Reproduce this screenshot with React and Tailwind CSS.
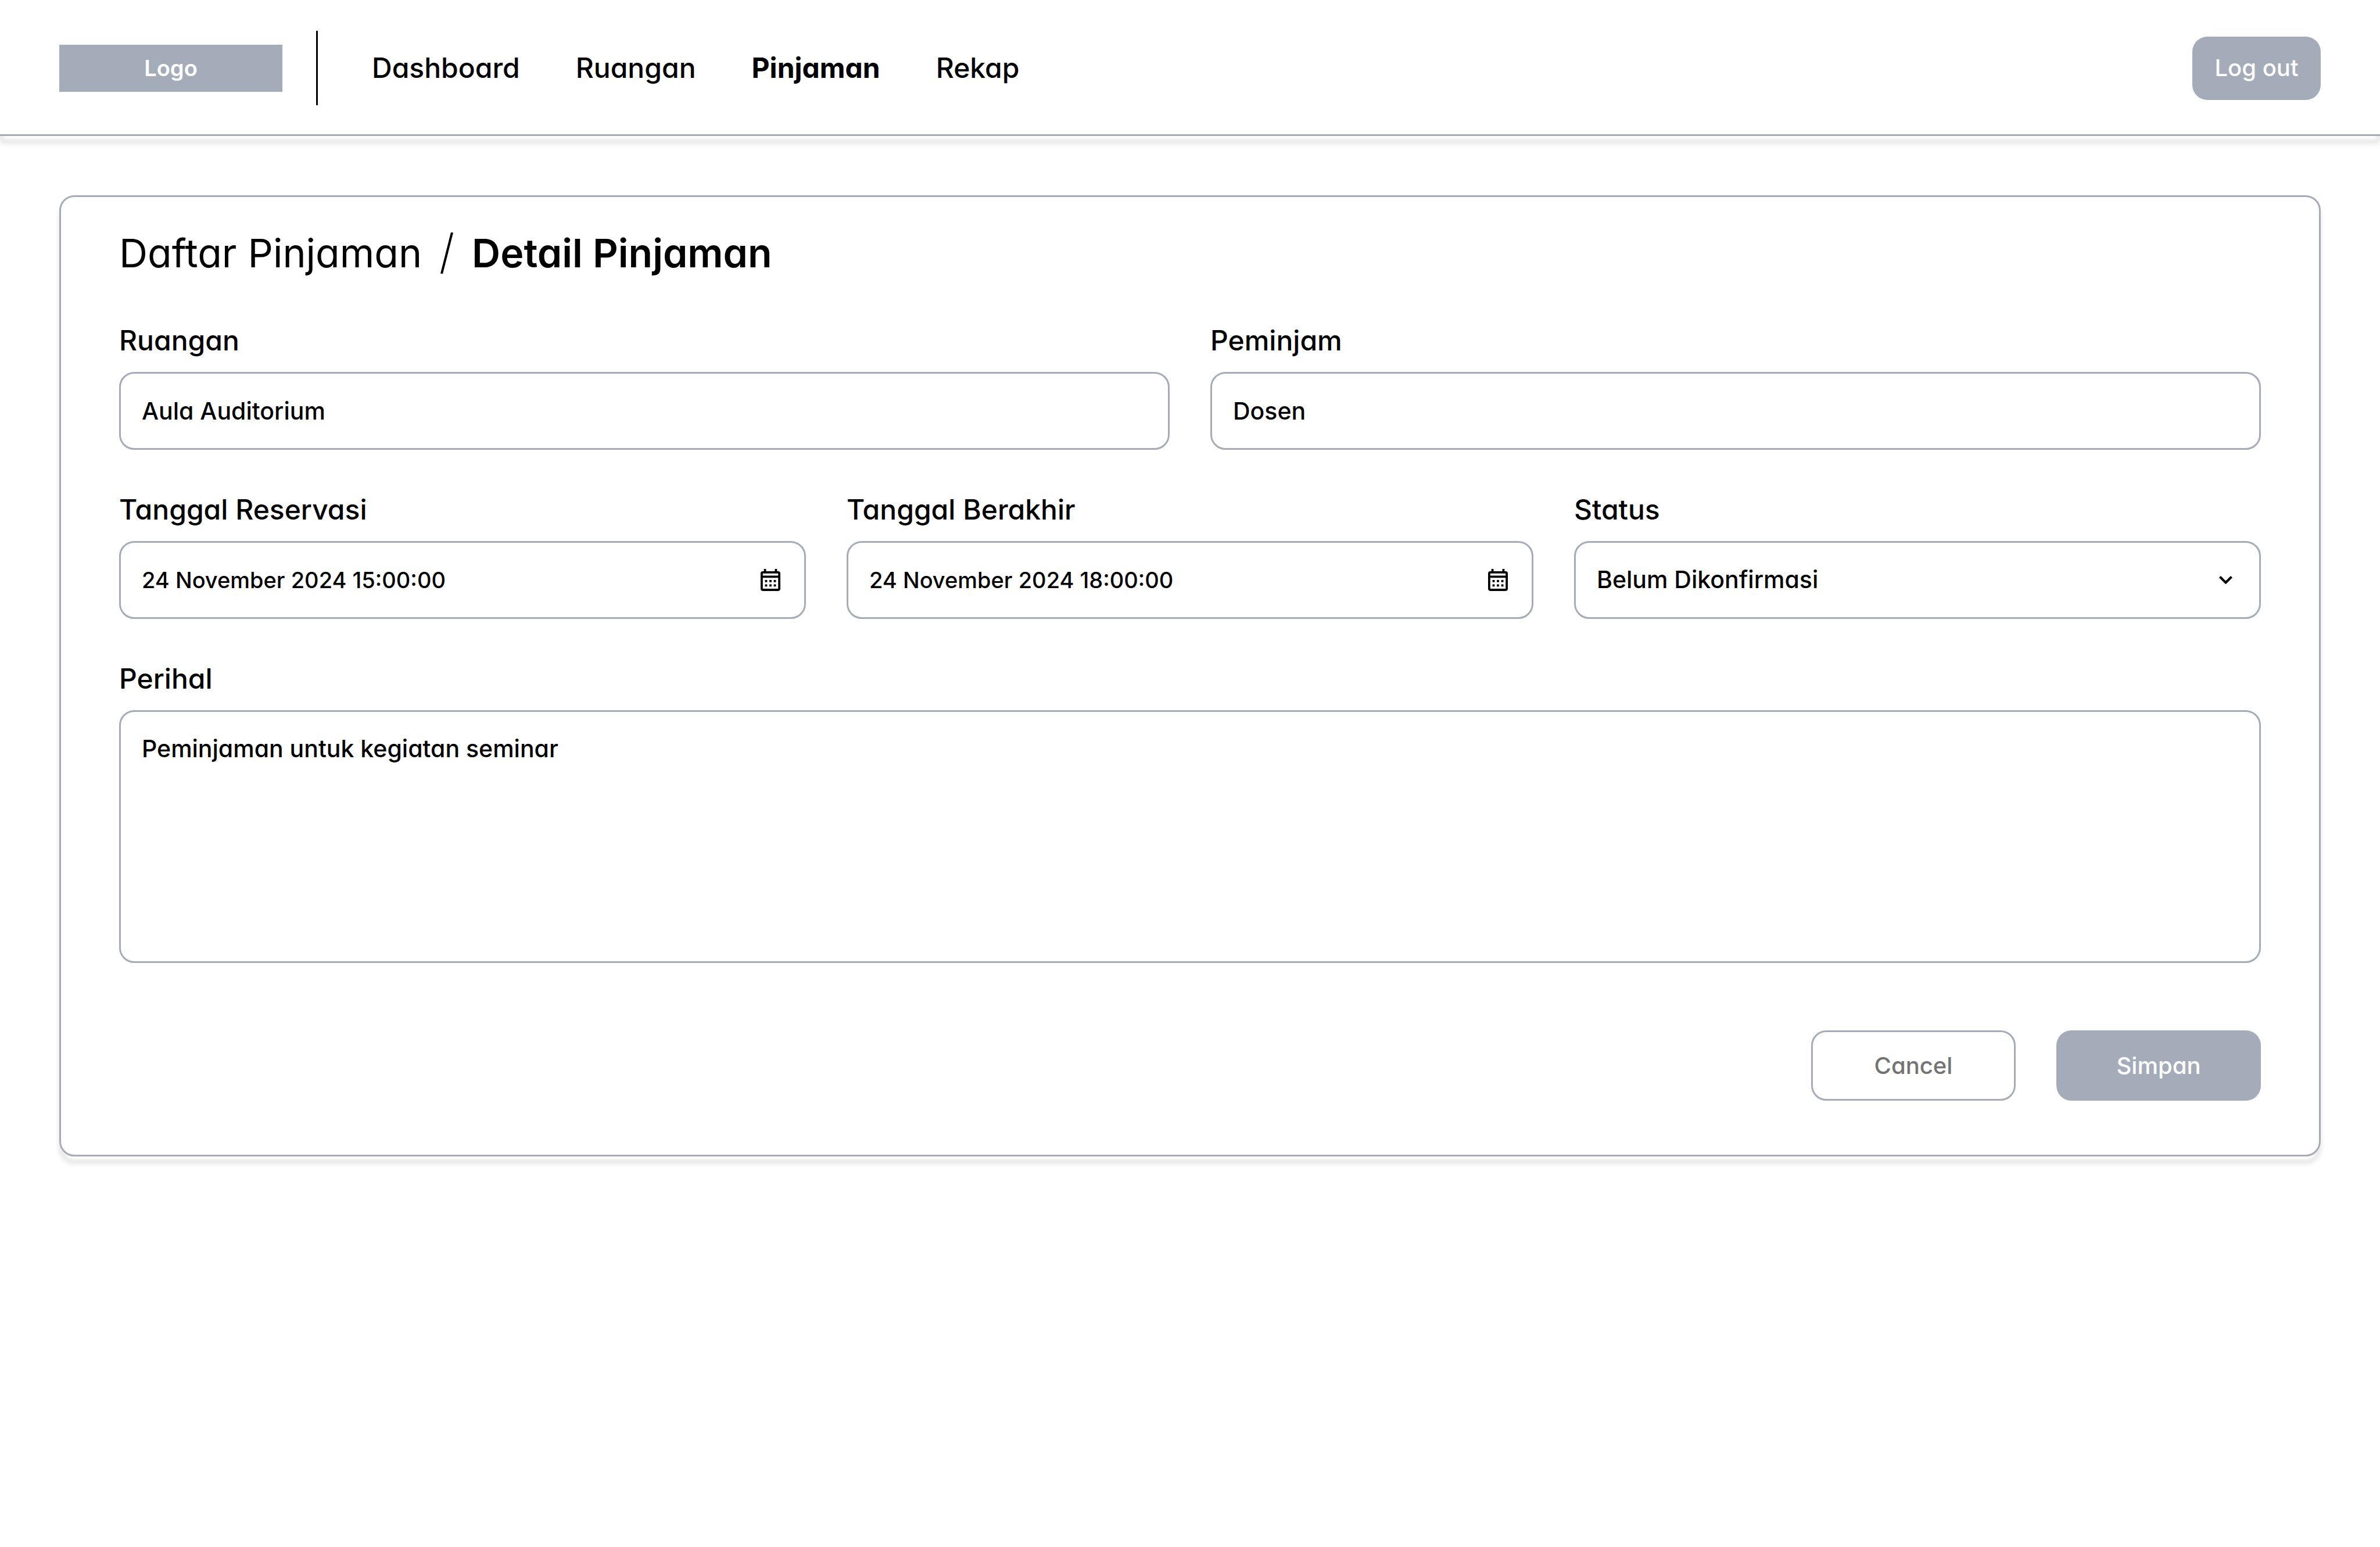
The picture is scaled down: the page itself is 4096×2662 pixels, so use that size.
import { useState } from "react";

const navItems = ["Dashboard", "Ruangan", "Pinjaman", "Rekap"];

const labelClass = "text-[48px] leading-[68px] font-medium";
const boxClass =
  "h-[134px] w-full rounded-[26px] border-3 border-[#a4abb9] bg-white px-9 font-medium text-black";
const shadowClass = "shadow-[0_12px_6px_-6px_#fff,0_12px_10px_0_rgba(0,0,0,0.12)]";

function CalendarIcon() {
  return (
    <svg viewBox="0 0 18 20" className="h-[38px] w-[34px]" fill="currentColor" aria-hidden="true">
      <path
        fillRule="evenodd"
        d="M3 0h2v2h8V0h2v2h1a2 2 0 0 1 2 2v14a2 2 0 0 1-2 2H2a2 2 0 0 1-2-2V4a2 2 0 0 1 2-2h1V0ZM2 4v2h14V4H2Zm0 4v10h14V8H2Zm2 2h2v2H4v-2Zm4 0h2v2H8v-2Zm4 0h2v2h-2v-2Zm-8 4h2v2H4v-2Zm4 0h2v2H8v-2Zm4 0h2v2h-2v-2Z"
      />
    </svg>
  );
}

function ChevronIcon() {
  return (
    <svg viewBox="0 0 28 17" className="h-[14px] w-[23px]" fill="none" aria-hidden="true">
      <path d="M1.8 1.8 14 14 26.2 1.8" stroke="currentColor" strokeWidth="5" />
    </svg>
  );
}

function Field({ id, label, children }) {
  return (
    <div className="flex flex-col gap-5">
      <label htmlFor={id} className={labelClass}>
        {label}
      </label>
      {children}
    </div>
  );
}

function TextField({ id, label, value }) {
  return (
    <Field id={id} label={label}>
      <input id={id} type="text" defaultValue={value} className={`${boxClass} text-[41px]`} />
    </Field>
  );
}

function DateField({ id, label, value }) {
  return (
    <Field id={id} label={label}>
      <div className="relative">
        <input id={id} type="text" defaultValue={value} className={`${boxClass} text-[38px]`} />
        <button
          type="button"
          aria-label={`Pilih ${label}`}
          className="absolute inset-y-0 right-0 flex items-center px-11"
        >
          <CalendarIcon />
        </button>
      </div>
    </Field>
  );
}

export default function App() {
  const [status, setStatus] = useState("Belum Dikonfirmasi");

  return (
    <div className="min-h-screen bg-white font-['Inter','Noto_Sans',sans-serif] text-black [font-feature-settings:'cv11']">
      <header
        className={`flex items-center border-b-3 border-[#a4abb9] px-[102px] pt-[53px] pb-[50px] ${shadowClass}`}
      >
        <div className="flex h-[81px] w-[384px] items-center justify-center bg-[#a4abb9] text-[38px] font-semibold text-white">
          Logo
        </div>
        <div className="ml-[58px] h-32 w-[3px] bg-black" />
        <nav className="ml-[93px] flex flex-1 gap-24 text-[48px] leading-[68px]">
          {navItems.map((item) => (
            <a
              key={item}
              href="#"
              aria-current={item === "Pinjaman" ? "page" : undefined}
              className={item === "Pinjaman" ? "font-bold" : "font-medium"}
            >
              {item}
            </a>
          ))}
        </nav>
        <button
          type="button"
          className="h-[109px] w-[221px] rounded-[26px] bg-[#a4abb9] text-[40px] font-medium text-white"
        >
          Log out
        </button>
      </header>

      <main className="px-[102px] pt-[102px]">
        <section
          className={`rounded-[26px] border-3 border-[#a4abb9] px-[100px] pt-12 pb-[93px] ${shadowClass}`}
        >
          <h1 className="flex items-center gap-8 text-[68px] leading-[96px]">
            <a href="#">Daftar Pinjaman</a>
            <svg viewBox="0 0 22 71" className="h-[71px] w-[22px]" aria-hidden="true">
              <path d="M20 0 2 71" stroke="currentColor" strokeWidth="4" />
            </svg>
            <span className="font-semibold">Detail Pinjaman</span>
          </h1>

          <form className="mt-[69px]">
            <div className="grid grid-cols-2 gap-[70px]">
              <TextField id="ruangan" label="Ruangan" value="Aula Auditorium" />
              <TextField id="peminjam" label="Peminjam" value="Dosen" />
            </div>
            <div className="mt-[69px] grid grid-cols-3 gap-[70px]">
              <DateField id="mulai" label="Tanggal Reservasi" value="24 November 2024 15:00:00" />
              <DateField id="akhir" label="Tanggal Berakhir" value="24 November 2024 18:00:00" />
              <Field id="status" label="Status">
                <div className="relative">
                  <select
                    id="status"
                    value={status}
                    onChange={(e) => setStatus(e.target.value)}
                    className={`${boxClass} appearance-none text-[41px]`}
                  >
                    <option>Belum Dikonfirmasi</option>
                    <option>Dikonfirmasi</option>
                  </select>
                  <span className="pointer-events-none absolute inset-y-0 right-[49px] flex items-center">
                    <ChevronIcon />
                  </span>
                </div>
              </Field>
            </div>
            <div className="mt-[69px]">
              <Field id="perihal" label="Perihal">
                <textarea
                  id="perihal"
                  defaultValue="Peminjaman untuk kegiatan seminar"
                  className="h-[435px] w-full resize-none rounded-[26px] border-3 border-[#a4abb9] bg-white px-9 py-[34px] text-[41px] leading-[58px] font-medium text-black"
                />
              </Field>
            </div>
            <div className="mt-[116px] flex justify-end gap-[70px]">
              <button
                type="button"
                className="h-[121px] w-[352px] rounded-[26px] border-3 border-[#a4abb9] text-[40px] font-medium text-[#737373]"
              >
                Cancel
              </button>
              <button
                type="submit"
                className="h-[121px] w-[352px] rounded-[26px] bg-[#a4abb9] text-[40px] font-medium text-white"
              >
                Simpan
              </button>
            </div>
          </form>
        </section>
      </main>
    </div>
  );
}
